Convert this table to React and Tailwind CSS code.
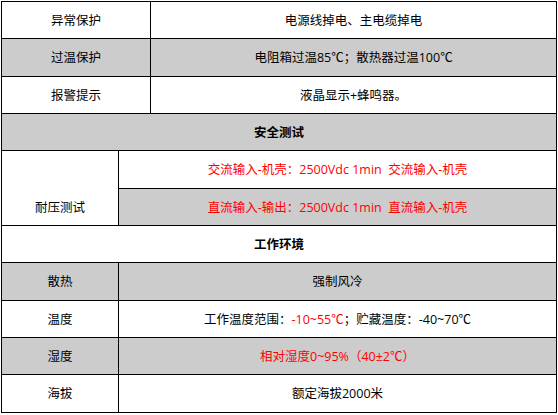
import React from 'react';

const red = 'text-[#ff0000]';

function Cell({ children, className = '', ...rest }) {
  return (
    <td
      className={`border-r border-b border-black text-center align-middle p-0 ${className}`}
      {...rest}
    >
      {children}
    </td>
  );
}

export default function App() {
  return (
    <div
      className="w-[558px] h-[415px] bg-white pt-[1px] pl-[1px] text-[12.5px] text-black leading-[17px]"
      style={{ fontFamily: '"Open Sans", "Noto Sans CJK SC", sans-serif' }}
    >
      <table className="table-fixed border-separate border-spacing-0 border-l border-t border-black w-[555px]">
        <colgroup>
          <col className="w-[117px]" />
          <col className="w-[32px]" />
          <col className="w-[406px]" />
        </colgroup>
        <tbody>
          <tr className="h-[37px]">
            <Cell colSpan={2}>异常保护</Cell>
            <Cell>电源线掉电、主电缆掉电</Cell>
          </tr>
          <tr className="h-[38px] bg-[#cccccc]">
            <Cell colSpan={2}>过温保护</Cell>
            <Cell>电阻箱过温85℃；散热器过温100℃</Cell>
          </tr>
          <tr className="h-[37px]">
            <Cell colSpan={2}>报警提示</Cell>
            <Cell>液晶显示+蜂鸣器。</Cell>
          </tr>
          <tr className="h-[37px] bg-[#cccccc]">
            <Cell colSpan={3} className="font-bold">安全测试</Cell>
          </tr>
          <tr className="h-[38px]">
            <Cell rowSpan={2} className="!align-bottom">
              <div className="h-[36px] flex items-center justify-center">耐压测试</div>
            </Cell>
            <Cell colSpan={2} className={red}>
              交流输入-机壳：2500Vdc 1min{'\u00a0 '}交流输入-机壳
            </Cell>
          </tr>
          <tr className="h-[37px]">
            <Cell colSpan={2} className={`bg-[#cccccc] ${red}`}>
              直流输入-输出：2500Vdc 1min{'\u00a0 '}直流输入-机壳
            </Cell>
          </tr>
          <tr className="h-[37px]">
            <Cell colSpan={3} className="font-bold">工作环境</Cell>
          </tr>
          <tr className="h-[38px] bg-[#cccccc]">
            <Cell>散热</Cell>
            <Cell colSpan={2}>强制风冷</Cell>
          </tr>
          <tr className="h-[37px]">
            <Cell>温度</Cell>
            <Cell colSpan={2}>
              工作温度范围：<span className={red}>-10~55℃</span>；贮藏温度：-40~70℃
            </Cell>
          </tr>
          <tr className="h-[37px] bg-[#cccccc]">
            <Cell>湿度</Cell>
            <Cell colSpan={2} className={red}>相对湿度0~95%（40±2℃）</Cell>
          </tr>
          <tr className="h-[38px]">
            <Cell>海拔</Cell>
            <Cell colSpan={2}>额定海拔2000米</Cell>
          </tr>
        </tbody>
      </table>
    </div>
  );
}
